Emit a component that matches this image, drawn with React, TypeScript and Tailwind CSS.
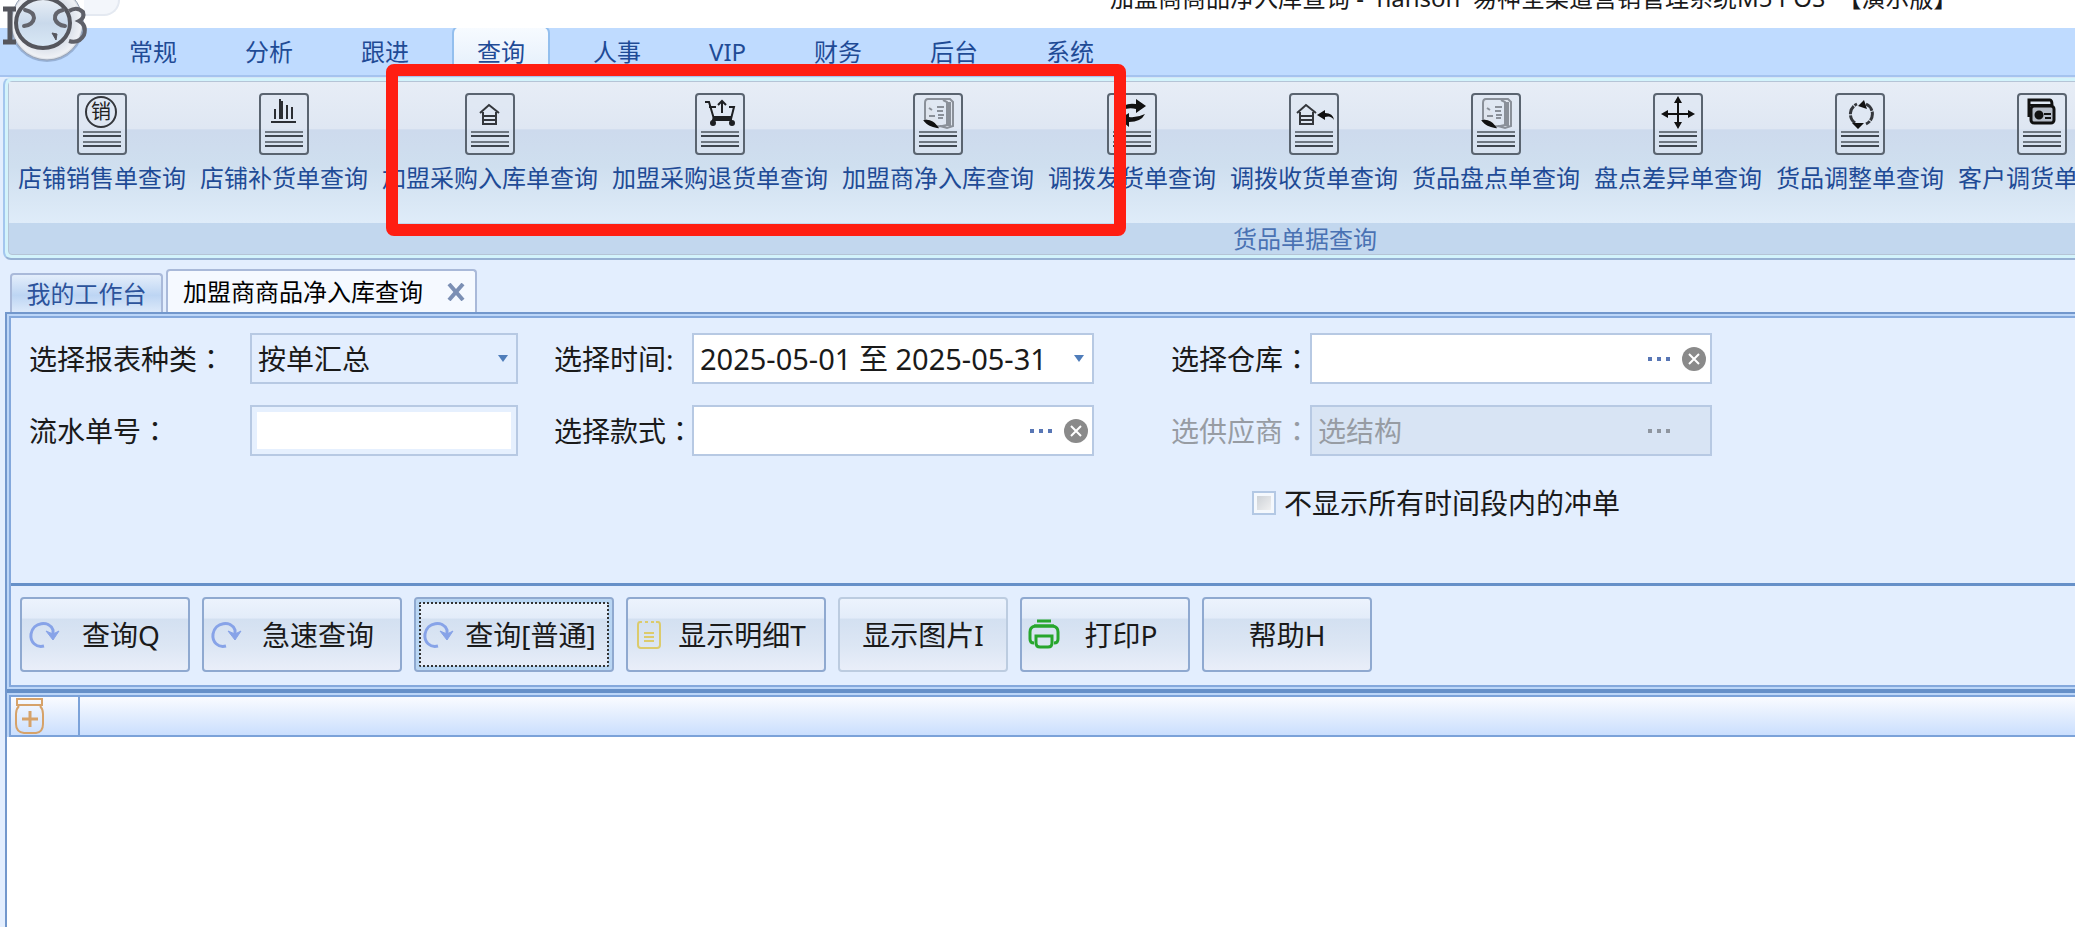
import React from 'react';

/* ----------------------------------
   Data
----------------------------------- */

const MENU_TABS = ['常规', '分析', '跟进', '查询', '人事', 'VIP', '财务', '后台', '系统'];
const ACTIVE_MENU = '查询';

type Glyph = 'sale' | 'bars' | 'house' | 'cart' | 'book' | 'swap' | 'receive' | 'move' | 'cycle' | 'cards';

const RIBBON_ITEMS: { label: string; glyph: Glyph }[] = [
  { label: '店铺销售单查询', glyph: 'sale' },
  { label: '店铺补货单查询', glyph: 'bars' },
  { label: '加盟采购入库单查询', glyph: 'house' },
  { label: '加盟采购退货单查询', glyph: 'cart' },
  { label: '加盟商净入库查询', glyph: 'book' },
  { label: '调拨发货单查询', glyph: 'swap' },
  { label: '调拨收货单查询', glyph: 'receive' },
  { label: '货品盘点单查询', glyph: 'book' },
  { label: '盘点差异单查询', glyph: 'move' },
  { label: '货品调整单查询', glyph: 'cycle' },
  { label: '客户调货单查询', glyph: 'cards' },
];

/* ----------------------------------
   Icons
----------------------------------- */

const Logo = () => (
  <svg width="92" height="70" viewBox="0 0 92 70" className="absolute left-0 top-0 z-10" aria-label="iPOS">
    <defs>
      <radialGradient id="ball" cx="50%" cy="50%" r="52%">
        <stop offset="0" stopColor="#d3e1f0" />
        <stop offset="0.7" stopColor="#dfe4ec" />
        <stop offset="0.9" stopColor="#eff1f5" />
        <stop offset="1" stopColor="#b4bdca" />
      </radialGradient>
      <linearGradient id="face" x1="0" y1="0" x2="0" y2="1">
        <stop offset="0" stopColor="#e9eff6" />
        <stop offset="0.5" stopColor="#c9d9eb" />
        <stop offset="1" stopColor="#d9e8f6" />
      </linearGradient>
    </defs>
    <ellipse cx="47" cy="25" rx="37" ry="37" fill="#6f87ad" opacity="0.5" />
    <ellipse cx="47" cy="23" rx="36" ry="37" fill="url(#ball)" stroke="#98a3b5" />
    <path d="M69 11q8-5 14 1q2 6-4 9q8 4 5 14q-5 9-15 6" fill="none" stroke="#5f6068" strokeWidth="4" />
    <ellipse cx="43" cy="23" rx="27" ry="25" fill="url(#face)" stroke="#55565d" strokeWidth="4" />
    <path d="M3 9h13M3 42h13M10 9v33" fill="none" stroke="#55565d" strokeWidth="5" />
    <path d="M25 10q9 2 9 8q-1 7-10 8" fill="none" stroke="#63646c" strokeWidth="4" strokeLinecap="round" />
    <path d="M63 10q-9 2-8 9q2 6 10 7" fill="none" stroke="#63646c" strokeWidth="4" strokeLinecap="round" />
    <path d="M52 33l4 7l1-6z" fill="#55565d" stroke="#55565d" />
  </svg>
);

const House = ({ x = 0 }: { x?: number }) => (
  <g transform={`translate(${x} 0)`} fill="none" stroke="#34373c" strokeWidth="2">
    <path d="M15 20l9-8l10 8" />
    <path d="M18 19v12h13V19M19 23h11M19 27h11" />
  </g>
);

const DocGlyph = ({ glyph }: { glyph: Glyph }) => {
  switch (glyph) {
    case 'sale':
      return (
        <>
          <ellipse cx="24" cy="19" rx="15" ry="15" fill="none" stroke="#34373c" strokeWidth="2" />
          <text x="24" y="26" fontSize="20" textAnchor="middle" fill="#222">销</text>
        </>
      );
    case 'bars':
      return <path d="M16 26V16M21 26V6M23 26V8M28 26V12M33 26V14M12 29h25" fill="none" stroke="#2b2e33" strokeWidth="2" />;
    case 'house':
      return <House />;
    case 'cart':
      return (
        <g fill="none" stroke="#1d1f22" strokeWidth="2">
          <path d="M10 9h4l5 17h17l3-12h-5M14 14h7" />
          <path d="M19 24h17v3H18z" fill="#1d1f22" />
          <path d="M27 20V8M23 12l4-4l4 4" />
          <circle cx="18" cy="30" r="2" fill="#1d1f22" />
          <circle cx="37" cy="30" r="2" fill="#1d1f22" />
        </g>
      );
    case 'book':
      return (
        <g fill="none" stroke="#8a9099" strokeWidth="2">
          <path d="M15 6h22l3 3v24l-6 2l-7-2M15 6q-3 0-3 4v17l11 6q3 1 11-1V9l-4-2" fill="#dfe5ee" />
          <path d="M36 9v24" strokeWidth="4" />
          <path d="M16 15l3 2M24 14h7M24 18h6M16 23h6M25 22h6M25 25h5" strokeWidth="2" />
          <path d="M12 28q7-1 12 6q-8-1-12-6z" fill="#111" stroke="#111" />
        </g>
      );
    case 'swap':
      return (
        <g fill="#111">
          <path d="M12 18q5-9 17-7V6l10 7l-10 7v-4q-8-2-17 2z" />
          <path d="M38 21q-4 8-16 8v5l-10-8l10-6v4q8 1 16-3z" />
        </g>
      );
    case 'receive':
      return (
        <>
          <House x={-7} />
          <path d="M45 27q-3-5-9-3v3l-8-5l8-5v3q8 0 9 7z" fill="#111" />
        </>
      );
    case 'move':
      return (
        <>
          <path d="M25 7v26M11 21h28" stroke="#111" strokeWidth="2" />
          <path d="M25 3l4 7h-8zM25 36l4-7h-8zM8 21l7-4v8zM42 21l-7-4v8z" fill="#111" />
        </>
      );
    case 'cycle':
      return (
        <>
          <path d="M20 30a11 11 0 0 1 2-19M31 11a11 11 0 0 1 0 20" fill="none" stroke="#34373c" strokeWidth="3" strokeDasharray="9 1" />
          <path d="M23 13l6-6l3 9zM17 30h12l-6 6z" fill="#111" />
        </>
      );
    case 'cards':
      return (
        <g fill="none" stroke="#111" strokeWidth="3">
          <path d="M12 24V7h21q2 0 2 5" />
          <rect x="14" y="13" width="23" height="17" rx="3" fill="#b6bdc8" />
          <path d="M12 12h23" strokeWidth="2" />
          <circle cx="22" cy="22" r="3" fill="#111" />
          <path d="M27 21h7M28 25h6" strokeWidth="2" />
        </g>
      );
  }
};

const DocIcon = ({ glyph }: { glyph: Glyph }) => (
  <svg width="50" height="62" viewBox="0 0 50 62">
    <rect x="1" y="1" width="48" height="60" rx="3" fill="#dde6f1" fillOpacity="0.6" stroke="#5a6470" strokeWidth="2" />
    <DocGlyph glyph={glyph} />
    <path d="M6 39h38M6 49h38" stroke="#6f7882" strokeWidth="2" />
    <path d="M6 43h38M6 53h38" stroke="#3f464f" strokeWidth="2" />
  </svg>
);

const RefreshIcon = () => (
  <svg width="32" height="32" viewBox="0 0 32 32" className="shrink-0">
    <path d="M16 27C8 29 2 23 3 15C5 3 21 1 25 11V16" fill="none" stroke="#87a3e8" strokeWidth="3" />
    <path d="M18 12l7 9l6-9l-6 3z" fill="#87a3e8" stroke="#87a3e8" />
  </svg>
);

const DetailIcon = () => (
  <svg width="32" height="32" viewBox="0 0 32 32" className="shrink-0" fill="none" stroke="#dccb6c" strokeWidth="2">
    <path d="M8 3H6q-2 0-2 3v20q0 3 3 3h16q3 0 3-3V6q0-3-2-3h-2M11 3h3M17 3h3M10 14h10M10 18h10M10 22h10" />
  </svg>
);

const PrinterIcon = () => (
  <svg width="32" height="32" viewBox="0 0 32 32" className="shrink-0" fill="none" stroke="#27a62d" strokeWidth="3">
    <path d="M9 2h14M6 7h20" />
    <path d="M6 24q-4 0-4-4v-7q0-5 5-6h18q5 1 5 6v7q0 4-4 4" />
    <path d="M8 17h16v7q0 4-4 4h-8q-4 0-4-4z" />
  </svg>
);

const JarIcon = () => (
  <svg width="30" height="38" viewBox="0 0 30 38" fill="none" stroke="#d6a269" strokeWidth="2">
    <path d="M2 2h25v6H2zM4 9q-3 3-3 8v10q0 8 8 9h12q7-1 7-9V17q0-5-3-8" />
    <path d="M15 14v16M7 22h16" strokeWidth="3" />
  </svg>
);

const Caret = () => (
  <svg width="10" height="7" viewBox="0 0 10 7">
    <path d="M0 0h10L5 7z" fill="#4f7dba" />
  </svg>
);

const Dots = ({ color }: { color: string }) => (
  <svg width="22" height="4" viewBox="0 0 22 4" fill={color}>
    <path d="M0 0h4v4H0zM9 0h4v4H9zM18 0h4v4h-4z" />
  </svg>
);

const ClearIcon = () => (
  <svg width="24" height="24" viewBox="0 0 24 24">
    <circle cx="12" cy="12" r="12" fill="#8a8a8a" />
    <path d="M7 7l10 10M17 7L7 17" stroke="#fff" strokeWidth="2" />
  </svg>
);

/* ----------------------------------
   Pieces
----------------------------------- */

interface FieldLabelProps {
  htmlFor: string;
  muted?: boolean;
  children: React.ReactNode;
}

// The JP face centres the full-width colon in its cell
const FieldLabel: React.FC<FieldLabelProps> = ({ htmlFor, muted, children }) => (
  <label htmlFor={htmlFor} className={`whitespace-nowrap ${muted ? 'text-[#979ca3]' : ''}`}>
    {children}
    <span className="font-['Noto_Sans_CJK_JP',sans-serif] leading-none">：</span>
  </label>
);

interface PickerProps {
  id: string;
  disabled?: boolean;
  value?: string;
}

const Picker: React.FC<PickerProps> = ({ id, disabled, value = '' }) => (
  <div
    className={`flex h-[51px] w-[402px] items-center border-2 border-[#b7c9e3] pl-1.5 pr-1 ${disabled ? 'bg-[#d8e4f4]' : 'bg-white'}`}
  >
    <input
      id={id}
      defaultValue={value}
      disabled={disabled}
      className="min-w-0 flex-1 bg-transparent outline-none disabled:text-[#979ca3]"
    />
    <button type="button" disabled={disabled} aria-label="选择" className="px-2">
      <Dots color={disabled ? '#8e959f' : '#5876b5'} />
    </button>
    <button type="button" disabled={disabled} aria-label="清除" className={disabled ? 'invisible ml-1' : 'ml-1'}>
      <ClearIcon />
    </button>
  </div>
);

interface ActionButtonProps {
  label: string;
  icon?: React.ReactNode;
  wide?: boolean;
  focused?: boolean;
  muted?: boolean;
}

const ActionButton: React.FC<ActionButtonProps> = ({ label, icon, wide, focused, muted }) => (
  <button
    type="button"
    className={`h-[75px] shrink-0 rounded-[4px] border-2 bg-[linear-gradient(#ecf3fd_0%,#e3ecf9_27%,#d3e0f1_28%,#dce6f4_65%,#e9eef9_100%)] ${wide ? 'w-[200px]' : 'w-[170px]'} ${
      muted ? 'border-[#bccce0]' : 'border-[#8fa9d0]'
    } ${focused ? 'p-[3px] shadow-[inset_0_0_0_4px_#b9d6f3]' : ''}`}
  >
    <span
      className={`flex h-full items-center ${focused ? 'rounded-[2px] border-2 border-dotted border-[#333] pl-px' : 'px-1.5'}`}
    >
      {icon}
      <span className="flex-1 whitespace-nowrap text-center">{label}</span>
    </span>
  </button>
);

/* ----------------------------------
   Page
----------------------------------- */

export default function App() {
  return (
    <div className="relative flex min-h-screen flex-col overflow-hidden bg-[#e3eefe] font-['Noto_Sans','Noto_Sans_CJK_SC',sans-serif] text-[28px] leading-8 text-[#1a1a1a]">
      {/* Title bar, scrolled partly out of view */}
      <header className="relative flex h-7 items-end overflow-hidden bg-white pb-4">
        <div className="absolute left-[84px] top-0 h-4 w-9 rounded-br-2xl border-b-2 border-r-2 border-[#e4e9f1] bg-[#f3f6fb]" />
        <h1 className="ml-[1110px] whitespace-pre text-[24px] leading-7">
          {'加盟商商品净入库查询 -  hanson  易神全渠道营销管理系统M5 POS  【演示版】'}
        </h1>
      </header>
      <Logo />

      {/* Menu tabs */}
      <nav className="flex h-[49px] items-end gap-[18px] border-b-2 border-[#a5c3ef] bg-[#bfdbff] pl-[104px] text-[24px] text-[#1f4b96]">
        {MENU_TABS.map((tab) => (
          <button
            key={tab}
            type="button"
            className={`h-[50px] rounded-t-lg border-2 border-b-0 px-[23px] pt-0.5 ${
              tab === ACTIVE_MENU ? 'border-[#93bfee] bg-[linear-gradient(#f7fbff,#e3eefb)]' : 'border-transparent'
            }`}
          >
            {tab}
          </button>
        ))}
      </nav>

      {/* Ribbon */}
      <section className="ml-[3px] overflow-hidden rounded-l-lg border-b-2 border-l-2 border-t border-b-[#97b1d3] border-l-[#a3c6ee] border-t-[#d5e6f5] bg-[#d3f3fb] py-[3px] pl-[3px]">
        <div className="min-w-[2594px] rounded-l-[4px] border border-[#b5c4d6] bg-[#c2d7ee]">
          <div className="flex gap-3.5 bg-[linear-gradient(#e7edf6_0%,#dfe7f3_33%,#cddaed_34%,#cfdfef_60%,#dfecf9_100%)] pb-[30px] pl-[9px] pt-[11px]">
            {RIBBON_ITEMS.map(({ label, glyph }) => (
              <button key={label} type="button" className="flex shrink-0 flex-col items-center gap-2 whitespace-nowrap text-[24px] leading-[30px] text-[#1f4b96]">
                <DocIcon glyph={glyph} />
                {label}
              </button>
            ))}
          </div>
          <div className="text-center text-[24px] leading-[31px] text-[#4a72b3]">货品单据查询</div>
        </div>
      </section>

      {/* Document tabs */}
      <div className="flex h-[52px] items-end gap-[3px] pl-[10px] text-[24px]">
        <button
          type="button"
          className="h-[39px] w-[153px] rounded-t-[4px] border-2 border-b-0 border-[#a9b9d9] bg-[linear-gradient(#e4eefb,#bdd5f3_55%,#dce9fa)] text-[#2c539b]"
        >
          我的工作台
        </button>
        <div className="flex h-[43px] items-center rounded-t-[4px] border-2 border-b-0 border-[#a9b9d9] bg-[#f5f9ff] pl-[15px] pr-[10px]">
          <button type="button" className="text-black">加盟商商品净入库查询</button>
          <button type="button" aria-label="关闭" className="ml-6">
            <svg width="18" height="18" viewBox="0 0 18 18">
              <path d="M2 1l14 16M16 1L2 17" stroke="#7b8fb4" strokeWidth="4" />
            </svg>
          </button>
        </div>
      </div>

      {/* Query panel */}
      <main className="ml-[5px] flex flex-1 flex-col border-l-2 border-t-2 border-[#7297cc] bg-white">
        <div className="border-b-4 border-[#6690c8] bg-[#bcd6f8] py-0.5 pl-0.5">
          <form className="border-y-2 border-l-2 border-[#84a8dc] bg-[#e3eefe]" onSubmit={(e) => e.preventDefault()}>
            <div className="grid h-[268px] auto-rows-[51px] grid-cols-[221px_304px_138px_479px_139px_402px] content-start items-center gap-y-[21px] border-b-[3px] border-[#6690c8] pl-[18px] pt-[15px]">
              <FieldLabel htmlFor="report">选择报表种类</FieldLabel>
              <div className="relative w-[268px]">
                <select id="report" className="h-[51px] w-full appearance-none border-2 border-[#b7c9e3] bg-transparent pl-1.5 outline-none">
                  <option>按单汇总</option>
                </select>
                <span className="pointer-events-none absolute right-[10px] top-[22px]">
                  <Caret />
                </span>
              </div>

              <label htmlFor="period">选择时间:</label>
              <div className="flex h-[51px] w-[402px] items-center border-2 border-[#b7c9e3] bg-white pl-1.5 pr-2">
                <input id="period" defaultValue="2025-05-01 至 2025-05-31" className="min-w-0 flex-1 text-[29px] outline-none" />
                <button type="button" aria-label="选择时间">
                  <Caret />
                </button>
              </div>

              <FieldLabel htmlFor="warehouse">选择仓库</FieldLabel>
              <Picker id="warehouse" />

              <FieldLabel htmlFor="serial">流水单号</FieldLabel>
              <input id="serial" className="h-[51px] w-[268px] border-2 border-[#b7c9e3] bg-white px-2 shadow-[inset_0_0_0_5px_#e6f0fe] outline-none" />

              <FieldLabel htmlFor="style">选择款式</FieldLabel>
              <Picker id="style" />

              <FieldLabel htmlFor="supplier" muted>选供应商</FieldLabel>
              <Picker id="supplier" disabled value="选结构" />

              <label className="col-span-2 col-start-5 ml-[81px] flex items-center gap-2">
                <input
                  type="checkbox"
                  className="size-6 shrink-0 appearance-none border-2 border-[#b3c8e4] bg-[linear-gradient(135deg,#c6cbd1,#f7f7f7)] shadow-[inset_0_0_0_3px_#f4f8fd]"
                />
                不显示所有时间段内的冲单
              </label>
            </div>

            <div className="flex gap-3 pb-[13px] pl-[9px] pt-[11px]">
              <ActionButton label="查询Q" icon={<RefreshIcon />} />
              <ActionButton label="急速查询" icon={<RefreshIcon />} wide />
              <ActionButton label="查询[普通]" icon={<RefreshIcon />} wide focused />
              <ActionButton label="显示明细T" icon={<DetailIcon />} wide />
              <ActionButton label="显示图片I" muted />
              <ActionButton label="打印P" icon={<PrinterIcon />} />
              <ActionButton label="帮助H" />
            </div>
          </form>
        </div>

        {/* Result grid */}
        <div className="bg-[#bcd6f8] pl-0.5 pt-0.5">
          <table className="w-full border-collapse">
            <thead>
              <tr className="h-10 bg-[linear-gradient(#fbfcff,#e2edfe_50%,#c9defe)]">
                <th className="w-[69px] border-2 border-[#7ba2d9] p-0 pl-1" aria-label="展开">
                  <JarIcon />
                </th>
                <th className="border-y-2 border-[#7ba2d9] p-0" />
              </tr>
            </thead>
          </table>
        </div>
      </main>

      {/* Highlight frame over the franchise queries */}
      <div className="pointer-events-none absolute left-[386px] top-16 z-20 h-[172px] w-[740px] rounded-lg border-[12px] border-[#ff1e12]" />
    </div>
  );
}
